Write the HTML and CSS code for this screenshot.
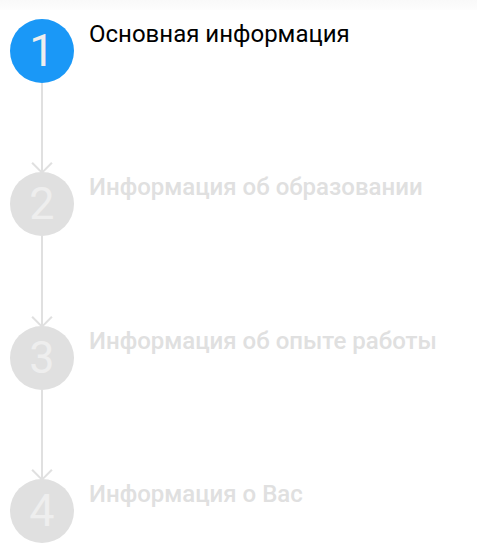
FILE: index.html
```html
<!DOCTYPE html>
<html lang="ru">
<head>
<meta charset="utf-8">
<link rel="stylesheet" href="styles.css">
</head>
<body>
<div class="topbar"></div>
<ol class="stepper">
  <li class="step active">
    <div class="rail">
      <div class="circle">1</div>
      <div class="connector"><span class="arrow"></span></div>
    </div>
    <div class="title">Основная информация</div>
  </li>
  <li class="step">
    <div class="rail">
      <div class="circle">2</div>
      <div class="connector"><span class="arrow"></span></div>
    </div>
    <div class="title">Информация об образовании</div>
  </li>
  <li class="step">
    <div class="rail">
      <div class="circle">3</div>
      <div class="connector"><span class="arrow"></span></div>
    </div>
    <div class="title">Информация об опыте работы</div>
  </li>
  <li class="step last">
    <div class="rail">
      <div class="circle">4</div>
    </div>
    <div class="title">Информация о Вас</div>
  </li>
</ol>
</body>
</html>
```

FILE: styles.css
```css
* { box-sizing: border-box; }
html, body {
  margin: 0;
  padding: 0;
  background: #ffffff;
  font-family: Roboto, "Liberation Sans", sans-serif;
}
.topbar {
  height: 10px;
  background: linear-gradient(#f9f9f9, #fdfdfd);
}
.stepper {
  list-style: none;
  margin: 0;
  padding: 9px 0 0 10px;
}
.step {
  display: flex;
  align-items: flex-start;
  gap: 15px;
}
.rail {
  width: 64px;
  display: flex;
  flex-direction: column;
  align-items: center;
}
.circle {
  width: 64px;
  height: 64px;
  border-radius: 50%;
  background: #e0e0e0;
  color: #eeeeee;
  font-weight: 400;
  font-size: 45px;
  line-height: 64px;
  text-align: center;
}
.active .circle {
  background: #1a98f7;
  color: #eeeeee;
}
.connector {
  position: relative;
  width: 2px;
  height: 89.33px;
  background: #e0e0e0;
}
.arrow {
  position: absolute;
  left: 50%;
  bottom: 1px;
  width: 15px;
  height: 15px;
  border-right: 2px solid #e0e0e0;
  border-bottom: 2px solid #e0e0e0;
  transform: translateX(-50%) rotate(45deg);
  transform-origin: center;
}
.title {
  margin-top: 1px;
  font-size: 24px;
  font-weight: 500;
  color: #e0e0e0;
  line-height: 28px;
  white-space: nowrap;
}
.active .title {
  color: #000000;
  font-weight: 400;
}
```
